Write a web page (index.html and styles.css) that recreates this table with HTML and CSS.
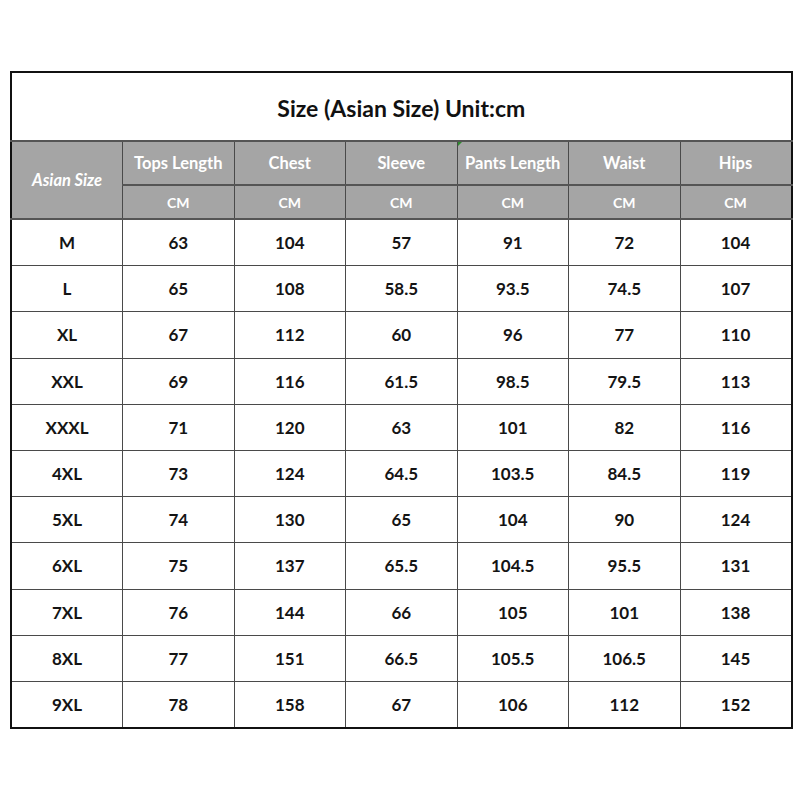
FILE: index.html
```html
<!DOCTYPE html>
<html>
<head>
<meta charset="utf-8">
<link rel="stylesheet" href="styles.css">
</head>
<body>
<div class="page">
<table class="chart">
  <colgroup>
    <col class="c"><col class="c"><col class="c"><col class="c"><col class="c"><col class="c"><col class="c">
  </colgroup>
  <tr class="title-row"><td colspan="7" class="title">Size (Asian Size) Unit:cm</td></tr>
  <tr class="head1">
    <th rowspan="2" class="asian">Asian Size</th>
    <th>Tops Length</th><th>Chest</th><th>Sleeve</th><th class="mark">Pants Length</th><th>Waist</th><th>Hips</th>
  </tr>
  <tr class="head2">
    <th>CM</th><th>CM</th><th>CM</th><th>CM</th><th>CM</th><th>CM</th>
  </tr>
  <tr><td>M</td><td>63</td><td>104</td><td>57</td><td>91</td><td>72</td><td>104</td></tr>
  <tr><td>L</td><td>65</td><td>108</td><td>58.5</td><td>93.5</td><td>74.5</td><td>107</td></tr>
  <tr><td>XL</td><td>67</td><td>112</td><td>60</td><td>96</td><td>77</td><td>110</td></tr>
  <tr><td>XXL</td><td>69</td><td>116</td><td>61.5</td><td>98.5</td><td>79.5</td><td>113</td></tr>
  <tr><td>XXXL</td><td>71</td><td>120</td><td>63</td><td>101</td><td>82</td><td>116</td></tr>
  <tr><td>4XL</td><td>73</td><td>124</td><td>64.5</td><td>103.5</td><td>84.5</td><td>119</td></tr>
  <tr><td>5XL</td><td>74</td><td>130</td><td>65</td><td>104</td><td>90</td><td>124</td></tr>
  <tr><td>6XL</td><td>75</td><td>137</td><td>65.5</td><td>104.5</td><td>95.5</td><td>131</td></tr>
  <tr><td>7XL</td><td>76</td><td>144</td><td>66</td><td>105</td><td>101</td><td>138</td></tr>
  <tr><td>8XL</td><td>77</td><td>151</td><td>66.5</td><td>105.5</td><td>106.5</td><td>145</td></tr>
  <tr><td>9XL</td><td>78</td><td>158</td><td>67</td><td>106</td><td>112</td><td>152</td></tr>
</table>
</div>
</body>
</html>
```
FILE: styles.css
```css
html, body {
  margin: 0;
  padding: 0;
  background: #ffffff;
}
.page {
  padding: 71px 0 0 10px;
}
.chart {
  border-collapse: collapse;
  table-layout: fixed;
  width: 781px;
  border: 2px solid #111;
  font-family: Lato, "Open Sans", "Liberation Sans", sans-serif;
  font-weight: 700;
  color: #141414;
}
.chart .c {
  width: 111.5px;
}
.chart td, .chart th {
  border: 1px solid #4a4a4a;
  text-align: center;
  vertical-align: middle;
  padding: 0;
  font-size: 17px;
  height: 45.2px;
}
.title-row .title {
  height: 65px;
  font-size: 23px;
  color: #111;
  border-bottom: 2px solid #555;
  padding-top: 2px;
}
.head1 th, .head2 th {
  background: #a5a5a5;
  color: #ffffff;
  font-weight: 700;
}
.head1 th {
  height: 42px;
  font-size: 16.5px;
  border-bottom: 2px solid #555;
}
.head2 th {
  height: 32px;
  font-size: 14px;
  border-bottom: 2px solid #555;
}
.head1 .asian {
  font-style: italic;
  font-size: 16.5px;
}
.head1 .mark {
  position: relative;
}
.head1 .mark::before {
  content: "";
  position: absolute;
  left: 0;
  top: 0;
  border-top: 4px solid #2e8b2e;
  border-right: 4px solid transparent;
}
```
